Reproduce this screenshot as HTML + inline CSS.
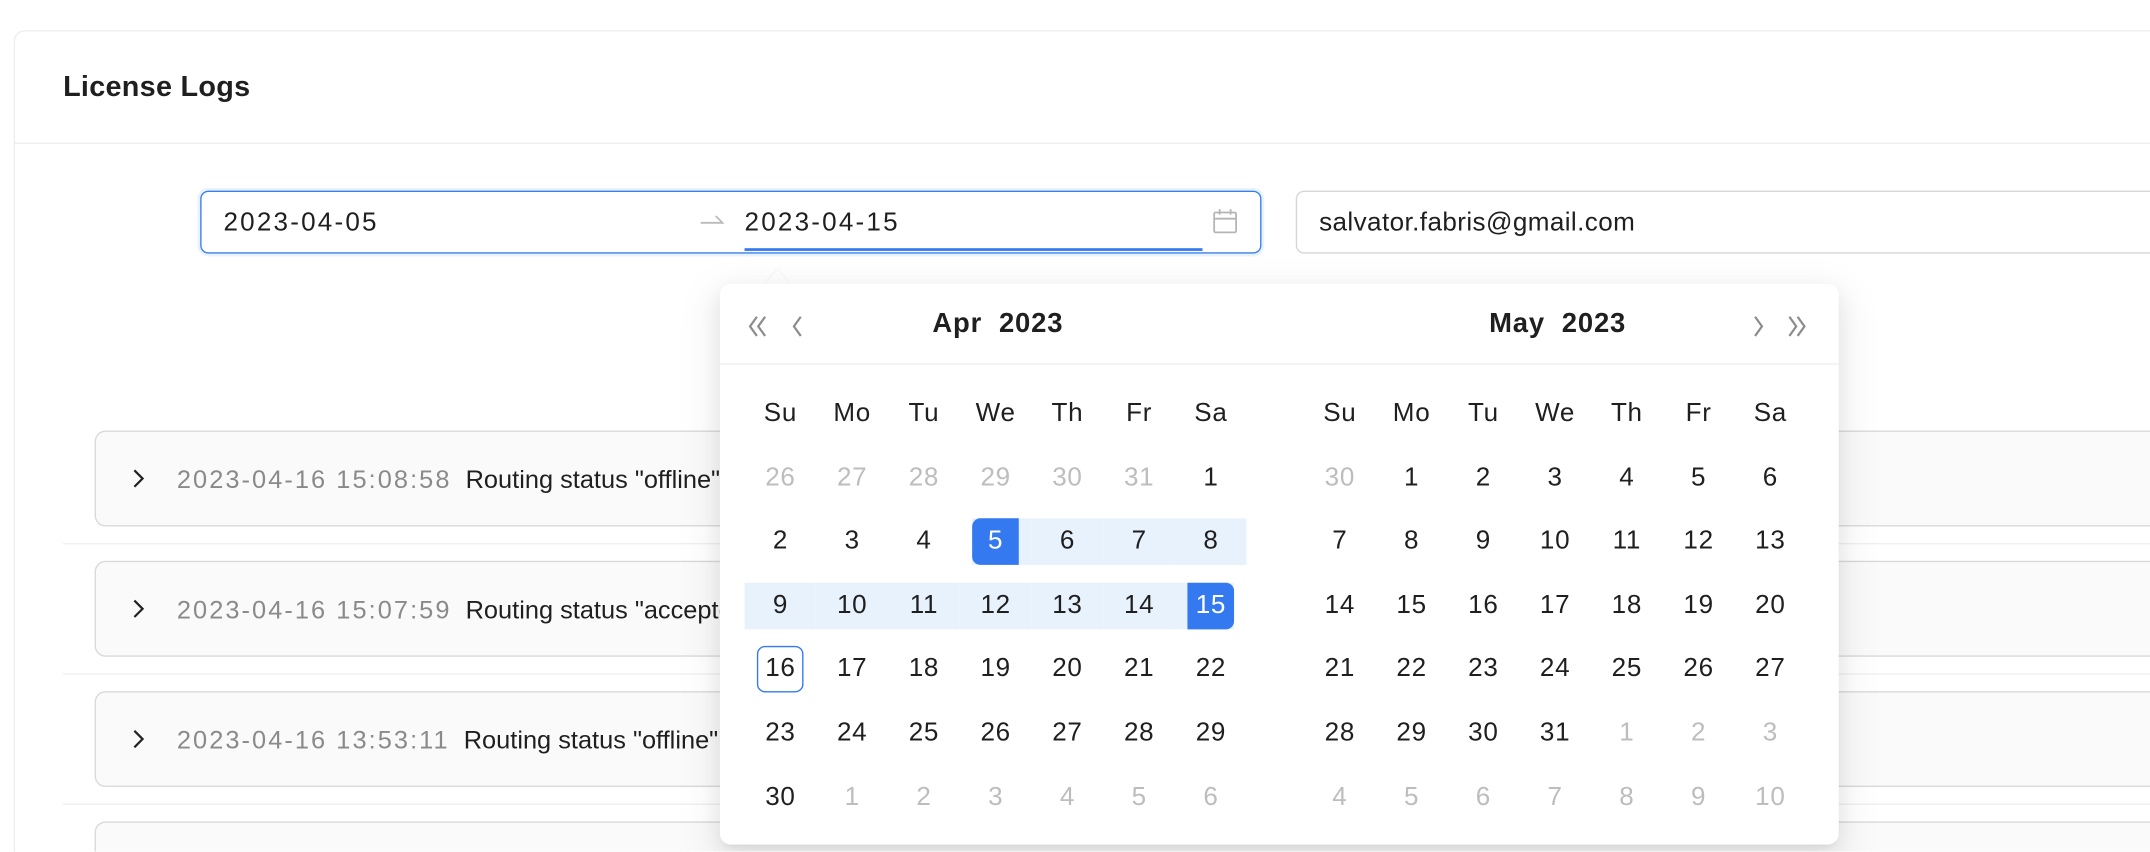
<!DOCTYPE html>
<html><head><meta charset="utf-8"><style>
html,body{margin:0;padding:0;width:2150px;height:851px;overflow:hidden;background:#fff;}
#w{position:absolute;left:0;top:0;width:1568px;height:621px;transform:scale(1.37117);transform-origin:0 0;font-family:"Liberation Sans",sans-serif;color:#1f1f1f;overflow:hidden;}
.a{position:absolute;}
.card{left:10px;top:22px;width:1600px;height:700px;border:1px solid #ededed;border-radius:8px;background:#fff;}
.hdr{left:46px;top:52px;font-size:21px;font-weight:bold;letter-spacing:0.2px;}
.hline{left:11px;top:104px;width:1600px;height:1px;background:#efefef;}
.rp{left:146px;top:139px;width:772px;height:44px;border:1px solid #3b7fee;border-radius:6px;box-shadow:0 0 0 2px #e9f2ff;background:#fff;}
.inp{font-size:19px;top:152px;}
.dt{letter-spacing:1.6px;}
.email{left:945px;top:139px;width:700px;height:44px;border:1px solid #d6d6d6;border-radius:6px;}
.row{left:69px;width:1600px;height:68px;border:1px solid #d9d9d9;border-radius:8px;background:#fafafa;}
.sep{left:46px;width:1600px;height:1px;background:#efefef;}
.rt{font-size:18.5px;white-space:nowrap;}
.ts{color:#8a8a8a;letter-spacing:1.5px;}
.pop{left:525px;top:207px;width:816px;height:409px;background:#fff;border-radius:8px;box-shadow:0 6px 16px rgba(0,0,0,.08),0 3px 6px -4px rgba(0,0,0,.12),0 9px 28px 8px rgba(0,0,0,.05);}
.grid{position:absolute;display:grid;grid-template-columns:repeat(7,52.33px);grid-auto-rows:34px;row-gap:12.6px;font-size:19px;}
.grid div{height:34px;line-height:34px;text-align:center;position:relative;letter-spacing:0.5px;}
.grid span{display:inline-block;width:34px;height:34px;border-radius:6px;box-sizing:border-box;}
.g{color:#bdbdbd;}
.in{background:#e8f2fd;}
.st{background:linear-gradient(to right,transparent 9px,#e8f2fd 9px);}
.en{background:linear-gradient(to left,transparent 9px,#e8f2fd 9px);}
.sel{background:#3479ef;color:#fff;}
.st .sel{border-radius:6px 0 0 6px;}
.en .sel{border-radius:0 6px 6px 0;}
.td{border:1.5px solid #3479ef;line-height:31px;}
.mt{font-size:20px;font-weight:bold;top:225px;letter-spacing:0.6px;}
</style></head><body><div id="w">
<div class="a card"></div>
<div class="a hdr">License Logs</div>
<div class="a hline"></div>

<div class="a rp"></div>
<div class="a inp dt" style="left:163px">2023-04-05</div>
<svg class="a" style="left:510px;top:156px" width="18" height="8" viewBox="0 0 18 8" fill="none" stroke="#bbb" stroke-width="1.3"><path d="M1 6.5H17L12 1.5"/></svg>
<div class="a inp dt" style="left:543px">2023-04-15</div>
<div class="a" style="left:543px;top:181px;width:334px;height:2px;background:#3479ef"></div>
<svg class="a" style="left:884px;top:152px" width="19" height="19" viewBox="0 0 19 19" fill="none" stroke="#b5b5b5" stroke-width="1.3"><rect x="1.5" y="3" width="16" height="14.5" rx="1"/><line x1="1.5" y1="7.5" x2="17.5" y2="7.5"/><line x1="5.5" y1="0.5" x2="5.5" y2="4.5"/><line x1="13.5" y1="0.5" x2="13.5" y2="4.5"/></svg>

<div class="a email"></div>
<div class="a inp" style="left:962px;letter-spacing:0.3px">salvator.fabris@gmail.com</div>

<div class="a row" style="top:314px"></div>
<div class="a sep" style="top:396px"></div>
<div class="a row" style="top:409px"></div>
<div class="a sep" style="top:491px"></div>
<div class="a row" style="top:504px"></div>
<div class="a sep" style="top:586px"></div>
<div class="a row" style="top:599px"></div>

<svg class="a" style="left:96px;top:341px" width="10" height="16" viewBox="0 0 10 16" fill="none" stroke="#222" stroke-width="1.6"><path d="M2 2L8 8L2 14"/></svg>
<div class="a rt" style="left:129px;top:339px"><span class="ts">2023-04-16 15:08:58</span>&nbsp; Routing status "offline"</div>
<svg class="a" style="left:96px;top:436px" width="10" height="16" viewBox="0 0 10 16" fill="none" stroke="#222" stroke-width="1.6"><path d="M2 2L8 8L2 14"/></svg>
<div class="a rt" style="left:129px;top:434px"><span class="ts">2023-04-16 15:07:59</span>&nbsp; Routing status "accepted"</div>
<svg class="a" style="left:96px;top:531px" width="10" height="16" viewBox="0 0 10 16" fill="none" stroke="#222" stroke-width="1.6"><path d="M2 2L8 8L2 14"/></svg>
<div class="a rt" style="left:129px;top:529px"><span class="ts">2023-04-16 13:53:11</span>&nbsp; Routing status "offline"</div>

<div class="a" style="left:558px;top:197px;width:0;height:0;border-left:9px solid transparent;border-right:9px solid transparent;border-bottom:10px solid #fff;filter:drop-shadow(0 -1px 1px rgba(0,0,0,.04))"></div>
<div class="a pop"></div>
<div class="a" style="left:525px;top:265px;width:816px;height:1px;background:#efefef"></div>
<svg class="a" style="left:544px;top:229px" width="50" height="18" viewBox="0 0 50 18" fill="none" stroke="#8c8c8c" stroke-width="1.6"><path d="M8 2L3 9L8 16M14 2L9 9L14 16M40 2L35 9L40 16"/></svg>
<svg class="a" style="left:1276px;top:229px" width="50" height="18" viewBox="0 0 50 18" fill="none" stroke="#8c8c8c" stroke-width="1.6"><path d="M4 2L9 9L4 16M29 2L34 9L29 16M35 2L40 9L35 16"/></svg>
<div class="a mt" style="left:680px">Apr&nbsp; 2023</div>
<div class="a mt" style="left:1086px">May&nbsp; 2023</div>

<div class="grid" style="left:543px;top:285px">
<div>Su</div><div>Mo</div><div>Tu</div><div>We</div><div>Th</div><div>Fr</div><div>Sa</div>
<div class="g">26</div><div class="g">27</div><div class="g">28</div><div class="g">29</div><div class="g">30</div><div class="g">31</div><div>1</div>
<div>2</div><div>3</div><div>4</div><div class="st"><span class="sel">5</span></div><div class="in">6</div><div class="in">7</div><div class="in">8</div>
<div class="in">9</div><div class="in">10</div><div class="in">11</div><div class="in">12</div><div class="in">13</div><div class="in">14</div><div class="en"><span class="sel">15</span></div>
<div><span class="td">16</span></div><div>17</div><div>18</div><div>19</div><div>20</div><div>21</div><div>22</div>
<div>23</div><div>24</div><div>25</div><div>26</div><div>27</div><div>28</div><div>29</div>
<div>30</div><div class="g">1</div><div class="g">2</div><div class="g">3</div><div class="g">4</div><div class="g">5</div><div class="g">6</div>
</div>

<div class="grid" style="left:951px;top:285px">
<div>Su</div><div>Mo</div><div>Tu</div><div>We</div><div>Th</div><div>Fr</div><div>Sa</div>
<div class="g">30</div><div>1</div><div>2</div><div>3</div><div>4</div><div>5</div><div>6</div>
<div>7</div><div>8</div><div>9</div><div>10</div><div>11</div><div>12</div><div>13</div>
<div>14</div><div>15</div><div>16</div><div>17</div><div>18</div><div>19</div><div>20</div>
<div>21</div><div>22</div><div>23</div><div>24</div><div>25</div><div>26</div><div>27</div>
<div>28</div><div>29</div><div>30</div><div>31</div><div class="g">1</div><div class="g">2</div><div class="g">3</div>
<div class="g">4</div><div class="g">5</div><div class="g">6</div><div class="g">7</div><div class="g">8</div><div class="g">9</div><div class="g">10</div>
</div>
</div></body></html>
